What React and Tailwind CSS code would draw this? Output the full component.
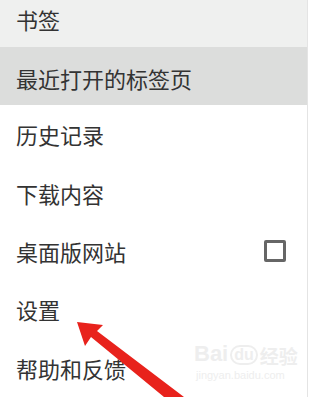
import React from "react";

const font = { fontFamily: '"Noto Sans CJK SC", "Noto Sans", sans-serif' };

function Row({ children, className = "", right = null }) {
  return (
    <div className={`flex items-center justify-between pl-4 pr-5 ${className}`}>
      <span className="text-[22px] leading-none text-[#333333]">{children}</span>
      {right}
    </div>
  );
}

export default function App() {
  return (
    <div className="relative w-[311px] h-[397px] overflow-hidden bg-white" style={font}>
      <div className="w-[308px] h-full border-r border-[#e4e4e4] flex flex-col">
        <Row className="h-[47px] bg-[#eff0ef] pb-[8px]">书签</Row>
        <Row className="h-[59px] bg-[#dcdddc] pt-[4px]">最近打开的标签页</Row>
        <Row className="h-[59px]">历史记录</Row>
        <Row className="h-[59px]">下载内容</Row>
        <Row
          className="h-[59px]"
          right={
            <div className="w-[22px] h-[22px] border-[3px] border-[#666] rounded-[2px] mr-[1px]" />
          }
        >
          桌面版网站
        </Row>
        <Row className="h-[59px]">设置</Row>
        <Row className="h-[59px]">帮助和反馈</Row>
      </div>

      {/* watermark */}
      <div className="absolute left-[194px] top-[343px] flex flex-col items-start pointer-events-none">
        <div className="flex items-end gap-[2px] text-[#eeeeee] text-[22px] leading-none font-bold" style={{ fontFamily: '"Liberation Sans", sans-serif' }}>
          <span>Bai</span>
          <span className="text-[16px] border-2 border-[#eeeeee] rounded-full px-[2px]">du</span>
          <span className="text-[19px]" style={font}>经验</span>
        </div>
        <div className="text-[#eeeeee] text-[11px] leading-none mt-[5px] ml-[2px]" style={{ fontFamily: '"Liberation Sans", sans-serif' }}>
          jingyan.baidu.com
        </div>
      </div>

      {/* red arrow */}
      <svg className="absolute left-0 top-0 pointer-events-none" width="311" height="397" viewBox="0 0 311 397">
        <polygon
          points="77,322 103,325 97,331 184,397 164,397 91,337 85,346"
          fill="#e8221c"
        />
      </svg>
    </div>
  );
}
